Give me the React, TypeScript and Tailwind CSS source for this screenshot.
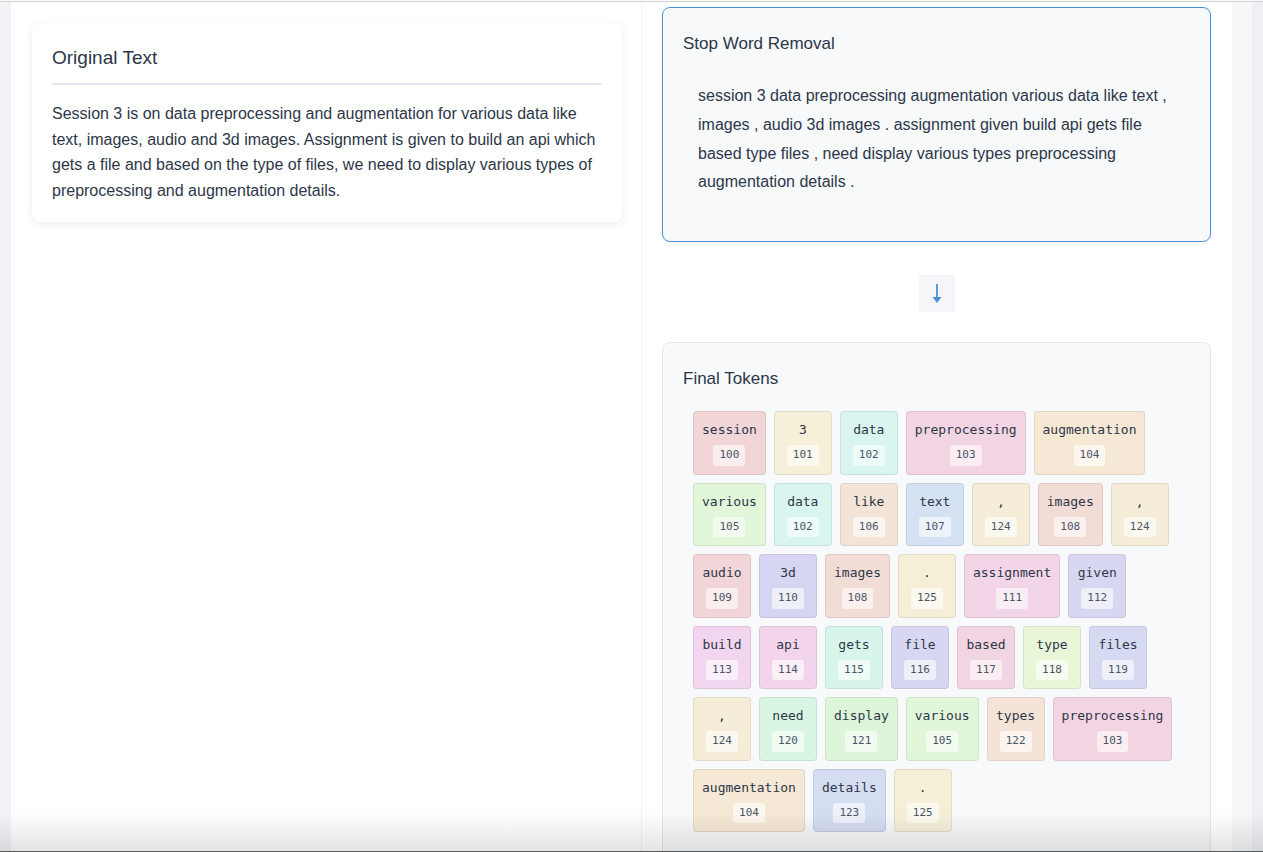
const tokenColors: Record<number, string> = {
  100: "bg-[#f2d5d6]",
  101: "bg-[#f6f0d8]",
  102: "bg-[#d8f5ef]",
  103: "bg-[#f2d4e2]",
  104: "bg-[#f5e8d5]",
  105: "bg-[#e2f6d9]",
  106: "bg-[#f3e4d7]",
  107: "bg-[#d5e2f3]",
  108: "bg-[#f2ddd6]",
  109: "bg-[#f2d5d8]",
  110: "bg-[#d6d6f2]",
  111: "bg-[#f3d5e8]",
  112: "bg-[#d8d7f2]",
  113: "bg-[#f2d5ee]",
  114: "bg-[#f2d4ec]",
  115: "bg-[#d8f5ec]",
  116: "bg-[#d7d7f2]",
  117: "bg-[#f2d5e2]",
  118: "bg-[#e9f7d8]",
  119: "bg-[#d6d9f2]",
  120: "bg-[#d9f6e4]",
  121: "bg-[#ddf5d9]",
  122: "bg-[#f5e3d8]",
  123: "bg-[#d5ddf3]",
  124: "bg-[#f6edd8]",
  125: "bg-[#f6efd8]",
};

const tokens: [string, number][] = [
  ["session", 100], ["3", 101], ["data", 102], ["preprocessing", 103], ["augmentation", 104],
  ["various", 105], ["data", 102], ["like", 106], ["text", 107], [",", 124], ["images", 108], [",", 124],
  ["audio", 109], ["3d", 110], ["images", 108], [".", 125], ["assignment", 111], ["given", 112],
  ["build", 113], ["api", 114], ["gets", 115], ["file", 116], ["based", 117], ["type", 118], ["files", 119],
  [",", 124], ["need", 120], ["display", 121], ["various", 105], ["types", 122], ["preprocessing", 103],
  ["augmentation", 104], ["details", 123], [".", 125],
];

function Token({ word, id }: { word: string; id: number }) {
  return (
    <div className={`flex flex-col items-center min-w-[58px] px-2 py-2 rounded border border-black/[0.08] ${tokenColors[id]}`}>
      <span className="font-['DejaVu_Sans_Mono',monospace] text-[13px] leading-[20px] text-[#2d3748] whitespace-pre">
        {word}
      </span>
      <span className="mt-[5px] px-1.5 py-[2px] rounded-[3px] bg-white/60 font-['DejaVu_Sans_Mono',monospace] text-[11px] leading-[16.5px] text-[#4a5568]">
        {id}
      </span>
    </div>
  );
}

export default function App() {
  return (
    <div className="relative h-[852px] overflow-hidden bg-white font-['Liberation_Sans',Arial,sans-serif] text-[#2d3748]">
      <div className="h-px bg-[#fafafa]" />
      <div className="h-px bg-[#d3d3d3]" />

      <div className="flex h-[850px]">
        <div className="w-[11px] bg-[#f1f3f7]" />

        <div className="flex flex-1 bg-white">
          {/* Left column */}
          <div className="w-[630px] pl-[21px] pr-[19px] pt-[21px]">
            <div className="rounded-lg bg-white p-5 pb-[19px] shadow-[0_2px_8px_rgba(0,0,0,0.08)]">
              <h2 className="pb-[11px] mb-4 border-b-2 border-[#e2e8f0] text-[19px] leading-[29px]">Original Text</h2>
              <p className="text-base leading-[25.5px]">
                Session 3 is on data preprocessing and augmentation for various data like text, images, audio and 3d
                images. Assignment is given to build an api which gets a file and based on the type of files, we need
                to display various types of preprocessing and augmentation details.
              </p>
            </div>
          </div>

          {/* Right column */}
          <div className="flex-1 border-l border-[#f1f1f3] pl-5 pr-[21px] pt-[5px]">
            <div className="rounded-lg border border-[#4a90d9] bg-[#f7f9fb] px-5 pt-5 pb-[28px] shadow-[0_1px_4px_rgba(0,0,0,0.04)]">
              <h3 className="text-[17px] leading-[32px]">Stop Word Removal</h3>
              <p className="mt-[6px] py-4 pl-[15px] pr-4 text-base leading-[28.8px]">
                session 3 data preprocessing augmentation various data like text , images , audio 3d images .
                assignment given build api gets file based type files , need display various types preprocessing
                augmentation details .
              </p>
            </div>

            <div className="flex justify-center mt-[33px] mb-[30px]">
              <div className="flex items-center justify-center w-9 h-[37px] bg-[#f4f6f9]">
                <svg width="12" height="22" viewBox="0 0 12 22" fill="none">
                  <line x1="6" y1="1" x2="6" y2="15" stroke="#4a90d9" strokeWidth="1.8" />
                  <polygon points="1.5,14 10.5,14 6,20" fill="#4a90d9" />
                </svg>
              </div>
            </div>

            <div className="rounded-lg border border-[#e2e8f0] bg-[#f7f9fb] px-5 pt-5 pb-5">
              <h3 className="text-[17px] leading-[32px]">Final Tokens</h3>
              <div className="mt-[6px] p-2.5 flex flex-wrap gap-2">
                {tokens.map(([w, id], i) => (
                  <Token key={i} word={w} id={id} />
                ))}
              </div>
            </div>
          </div>
        </div>

        <div className="w-[20px] bg-[#f6f7f9]" />
        <div className="w-[11px] bg-[#eef0f4]" />
      </div>

      {/* bottom window fade */}
      <div className="pointer-events-none absolute left-0 right-0 bottom-0 h-[40px] bg-linear-to-b from-transparent to-black/[0.11]" />
      <div className="pointer-events-none absolute left-0 right-0 bottom-0 h-px bg-[#5c5c5c]" />
    </div>
  );
}
